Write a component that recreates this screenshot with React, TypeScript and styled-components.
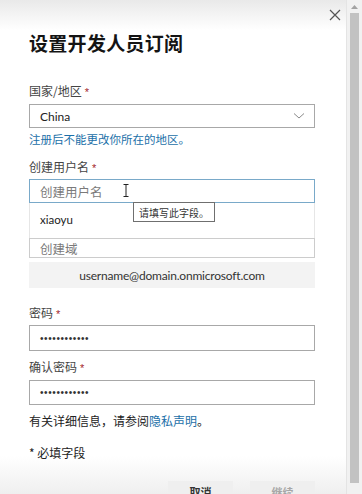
import * as React from "react";
import styled, { createGlobalStyle } from "styled-components";

const colors = {
  text: "#333333",
  title: "#141414",
  label: "#444444",
  border: "#a8a8a8",
  focus: "#79a9c9",
  link: "#1b6fa8",
  required: "#a4262c",
  muted: "#7a7a7a",
  panel: "#f3f3f3",
};

const fonts = {
  cjk: `"Noto Sans CJK SC", "Noto Sans", sans-serif`,
  latin: `Lato, "Noto Sans CJK SC", sans-serif`,
  mono: `"Liberation Sans", Arial, sans-serif`,
};

const GlobalStyle = createGlobalStyle`
  html, body {
    margin: 0;
    padding: 0;
    background: #ffffff;
    overflow: hidden;
  }
  body {
    font-family: ${fonts.cjk};
    color: ${colors.text};
  }
  * {
    box-sizing: border-box;
  }
`;

const Window = styled.div`
  display: flex;
  width: 362px;
  height: 494px;
  overflow: hidden;
`;

const Dialog = styled.div`
  flex: 1;
  display: flex;
  flex-direction: column;
  padding-left: 29px;
  background: linear-gradient(
    to bottom,
    #e9e9e9 0,
    #ffffff 30px,
    #ffffff calc(100% - 38px),
    #efefef 100%
  );
`;

const TopBar = styled.div`
  height: 30px;
  display: flex;
  justify-content: flex-end;
  align-items: flex-start;
  padding: 9px 5px 0 0;
`;

const CloseButton = styled.button`
  width: 12px;
  height: 12px;
  padding: 0;
  border: none;
  background: transparent;
  display: flex;
  cursor: pointer;
`;

const Title = styled.h1`
  margin: 9px 0 0;
  font-size: 19px;
  line-height: 26px;
  font-weight: 700;
  color: ${colors.title};
  letter-spacing: 0.3px;
`;

const Form = styled.div`
  width: 286px;
  display: flex;
  flex-direction: column;
`;

const Label = styled.div<{ $mt: number }>`
  margin-top: ${(p) => p.$mt}px;
  font-size: 12px;
  line-height: 18px;
  color: ${colors.label};
`;

const Req = styled.span`
  color: ${colors.required};
  font-family: ${fonts.mono};
  font-size: 11px;
  margin-left: 3px;
`;

const Field = styled.div<{ $mt: number; $h: number; $focused?: boolean; $soft?: boolean }>`
  margin-top: ${(p) => p.$mt}px;
  height: ${(p) => p.$h}px;
  display: flex;
  align-items: center;
  padding: 0 10px;
  border: 1px solid
    ${(p) => (p.$focused ? colors.focus : p.$soft ? "#cccccc" : colors.border)};
  background: #ffffff;
  font-family: ${fonts.latin};
  font-size: 12px;
  color: #222222;
`;

const Placeholder = styled.span`
  font-family: ${fonts.cjk};
  font-size: 12.5px;
  color: ${colors.muted};
`;

const Dots = styled.span`
  font-family: ${fonts.mono};
  font-size: 10px;
  letter-spacing: 0.6px;
  color: #333333;
`;

const Chevron = styled.svg`
  margin-left: auto;
  margin-right: -1px;
`;

const Hint = styled.div`
  margin-top: 3px;
  font-size: 11.5px;
  line-height: 16px;
  color: ${colors.link};
`;

const UserWrap = styled.div`
  position: relative;
  margin-top: 2px;
`;

const Suggestions = styled.div`
  position: absolute;
  left: 0;
  right: 0;
  top: 100%;
  height: 35px;
  background: #ffffff;
  border-left: 1px solid #e6e6e6;
  border-right: 1px solid #e6e6e6;
  display: flex;
  align-items: center;
  padding: 0 10px 2px;
  font-family: ${fonts.latin};
  font-size: 11.5px;
  color: #222222;
  z-index: 1;
`;

const Tooltip = styled.div`
  position: absolute;
  left: 104px;
  top: 23px;
  height: 20px;
  padding: 0 5px;
  display: flex;
  align-items: center;
  background: #ffffff;
  border: 1px solid #6f6f6f;
  font-size: 10px;
  color: #333333;
  z-index: 2;
`;

const Caret = styled.svg`
  position: absolute;
  left: 94px;
  top: 5px;
`;

const EmailPreview = styled.div`
  margin-top: 4px;
  height: 26px;
  display: flex;
  align-items: center;
  justify-content: center;
  background: ${colors.panel};
  font-family: ${fonts.latin};
  font-size: 12px;
  letter-spacing: -0.2px;
  color: #333333;
`;

const Note = styled.div<{ $mt: number }>`
  margin-top: ${(p) => p.$mt}px;
  font-size: 12px;
  line-height: 18px;
  color: #222222;
`;

const Link = styled.a`
  color: ${colors.link};
  text-decoration: none;
`;

const Footer = styled.div`
  margin-top: 19px;
  width: 286px;
  display: flex;
  justify-content: flex-end;
  gap: 17px;
`;

const Button = styled.button<{ $disabled?: boolean }>`
  width: 65px;
  height: 30px;
  border: none;
  background: #efefef;
  padding: 4px 0 0;
  display: flex;
  justify-content: center;
  align-items: flex-start;
  font-family: ${fonts.cjk};
  font-size: 11px;
  line-height: 14px;
  font-weight: 700;
  color: ${(p) => (p.$disabled ? "#a6a6a6" : "#333333")};
`;

const ScrollBar = styled.div`
  width: 16px;
  height: 100%;
  display: flex;
  flex-direction: column;
  align-items: flex-start;
  background: #f1f1f1;
  border-left: 1px solid #e4e4e4;
  padding-left: 3px;
`;

const ArrowUp = styled.div`
  height: 13px;
  width: 9px;
  display: flex;
  justify-content: center;
  align-items: center;
`;

const Thumb = styled.div`
  width: 9px;
  height: 470px;
  background: #c2c2c2;
`;

export default function App() {
  return (
    <>
      <GlobalStyle />
      <Window>
        <Dialog>
          <TopBar>
            <CloseButton aria-label="关闭">
              <svg width="12" height="12" viewBox="0 0 12 12">
                <path d="M1 1 L11 11 M11 1 L1 11" stroke="#555" strokeWidth="1.2" fill="none" />
              </svg>
            </CloseButton>
          </TopBar>
          <Title>设置开发人员订阅</Title>
          <Form>
            <Label $mt={26}>
              国家/地区<Req>*</Req>
            </Label>
            <Field $mt={3} $h={24}>
              China
              <Chevron width="12" height="8" viewBox="0 0 12 8">
                <path d="M1 1.5 L6 6 L11 1.5" stroke="#8a8a8a" strokeWidth="1" fill="none" />
              </Chevron>
            </Field>
            <Hint>注册后不能更改你所在的地区。</Hint>

            <Label $mt={11}>
              创建用户名<Req>*</Req>
            </Label>
            <UserWrap>
              <Field $mt={0} $h={24} $focused>
                <Placeholder>创建用户名</Placeholder>
              </Field>
              <Caret width="6" height="13" viewBox="0 0 6 13">
                <path d="M0.5 0.5 H5.5 M3 0.5 V12.5 M0.5 12.5 H5.5" stroke="#222" strokeWidth="1" fill="none" />
              </Caret>
              <Suggestions>xiaoyu</Suggestions>
              <Tooltip>请填写此字段。</Tooltip>
            </UserWrap>
            <Field $mt={35} $h={20} $soft>
              <Placeholder>创建域</Placeholder>
            </Field>
            <EmailPreview>username@domain.onmicrosoft.com</EmailPreview>

            <Label $mt={16}>
              密码<Req>*</Req>
            </Label>
            <Field $mt={2} $h={26}>
              <Dots>••••••••••••</Dots>
            </Field>

            <Label $mt={7}>
              确认密码<Req>*</Req>
            </Label>
            <Field $mt={3} $h={25}>
              <Dots>••••••••••••</Dots>
            </Field>

            <Note $mt={7}>
              有关详细信息，请参阅<Link href="#">隐私声明</Link>。
            </Note>
            <Note $mt={14}>* 必填字段</Note>
          </Form>
          <Footer>
            <Button>取消</Button>
            <Button $disabled>继续</Button>
          </Footer>
        </Dialog>
        <ScrollBar>
          <ArrowUp>
            <svg width="7" height="4" viewBox="0 0 7 4">
              <path d="M0 4 L3.5 0 L7 4 Z" fill="#a3a3a3" />
            </svg>
          </ArrowUp>
          <Thumb />
        </ScrollBar>
      </Window>
    </>
  );
}
